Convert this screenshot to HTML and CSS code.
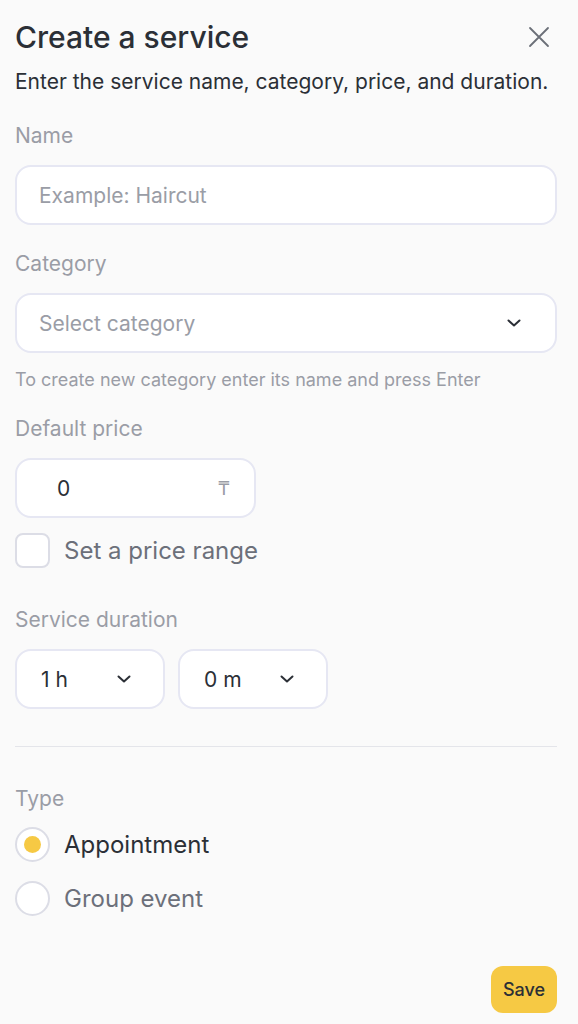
FILE: index.html
```html
<!DOCTYPE html>
<html lang="en">
<head>
  <meta charset="UTF-8">
  <meta name="viewport" content="width=device-width, initial-scale=1.0">
  <title>Create a service</title>
  <link rel="stylesheet" href="styles.css">
</head>
<body>
  <div class="sheet">
    <div class="header">
      <h1>Create a service</h1>
      <button class="close-btn" aria-label="Close">
        <svg width="24" height="24" viewBox="0 0 24 24" fill="none" stroke="#6b6f78" stroke-width="1.8" stroke-linecap="round">
          <path d="M3 3L21 21M21 3L3 21"/>
        </svg>
      </button>
    </div>
    <p class="subtitle">Enter the service name, category, price, and duration.</p>

    <label class="field-label name-label">Name</label>
    <div class="input">
      <span class="placeholder">Example: Haircut</span>
    </div>

    <label class="field-label">Category</label>
    <div class="input select">
      <span class="placeholder">Select category</span>
      <svg class="chevron" width="14" height="8" viewBox="0 0 14 8" fill="none" stroke="#2b2f36" stroke-width="2" stroke-linecap="round" stroke-linejoin="round">
        <path d="M1.5 1.5L7 6.5L12.5 1.5"/>
      </svg>
    </div>
    <p class="hint">To create new category enter its name and press Enter</p>

    <label class="field-label">Default price</label>
    <div class="input price">
      <span class="value">0</span>
      <span class="currency">₸</span>
    </div>

    <div class="check-row">
      <span class="checkbox"></span>
      <span class="check-text">Set a price range</span>
    </div>

    <label class="field-label duration-label">Service duration</label>
    <div class="duration">
      <div class="input select small">
        <span class="value">1 h</span>
        <svg class="chevron" width="14" height="8" viewBox="0 0 14 8" fill="none" stroke="#2b2f36" stroke-width="2" stroke-linecap="round" stroke-linejoin="round">
          <path d="M1.5 1.5L7 6.5L12.5 1.5"/>
        </svg>
      </div>
      <div class="input select small">
        <span class="value">0 m</span>
        <svg class="chevron" width="14" height="8" viewBox="0 0 14 8" fill="none" stroke="#2b2f36" stroke-width="2" stroke-linecap="round" stroke-linejoin="round">
          <path d="M1.5 1.5L7 6.5L12.5 1.5"/>
        </svg>
      </div>
    </div>

    <hr class="divider">

    <label class="field-label type-label">Type</label>
    <div class="radio-row">
      <span class="radio checked"></span>
      <span class="radio-text active">Appointment</span>
    </div>
    <div class="radio-row">
      <span class="radio"></span>
      <span class="radio-text">Group event</span>
    </div>

    <div class="footer">
      <button class="save-btn">Save</button>
    </div>
  </div>
</body>
</html>
```

FILE: styles.css
```css
body {
  margin: 0;
  background: #fafafa;
  font-family: 'Inter', 'Roboto', sans-serif;
  color: #2b2f36;
}

.sheet {
  padding: 0 21px 0 15px;
}

.header {
  display: flex;
  align-items: center;
  justify-content: space-between;
  height: 74px;
}

h1 {
  margin: 0;
  font-size: 30px;
  line-height: 36px;
  font-weight: 500;
  color: #2b2f36;
}

.close-btn {
  background: none;
  border: none;
  padding: 0;
  margin-right: 6px;
  cursor: pointer;
  display: flex;
}

.subtitle {
  margin: -4px 0 0;
  font-size: 21px;
  line-height: 24px;
  color: #2b2f36;
}

.field-label {
  display: block;
  margin-top: 27px;
  font-size: 21px;
  line-height: 24px;
  color: #9a9da6;
}

.name-label {
  margin-top: 30px;
}

.input {
  box-sizing: border-box;
  margin-top: 17px;
  height: 60px;
  background: #fff;
  border: 2px solid #e6e7f3;
  border-radius: 16px;
  display: flex;
  align-items: center;
  padding: 0 22px;
  font-size: 21px;
}

.placeholder {
  color: #9a9da6;
}

.select {
  justify-content: space-between;
}

.chevron {
  margin-right: 12px;
}

.hint {
  margin: 16px 0 -1px;
  font-size: 18px;
  line-height: 22px;
  color: #9a9da6;
}

.price {
  width: 241px;
  justify-content: space-between;
  padding: 0 24px 0 40px;
}

.value {
  color: #2b2f36;
}

.currency {
  color: #9a9da6;
  font-size: 19px;
}

.check-row {
  display: flex;
  align-items: center;
  gap: 14px;
  margin-top: 15px;
}

.checkbox {
  box-sizing: border-box;
  width: 35px;
  height: 35px;
  border: 2px solid #dcdde6;
  border-radius: 8px;
  background: #fff;
}

.check-text {
  font-size: 24px;
  line-height: 28px;
  color: #6c707a;
}

.duration-label {
  margin-top: 40px;
}

.duration {
  display: flex;
  gap: 13px;
}

.small {
  width: 150px;
  padding: 0 32px 0 24px;
}

.small .chevron {
  margin-right: 0;
}

.divider {
  margin: 37px 0 0;
  border: none;
  border-top: 1px solid #e4e5ea;
}

.type-label {
  margin-top: 40px;
}

.radio-row {
  display: flex;
  align-items: center;
  gap: 14px;
  margin-top: 16px;
}

.radio-row + .radio-row {
  margin-top: 19px;
}

.radio {
  box-sizing: border-box;
  width: 35px;
  height: 35px;
  border: 2px solid #dcdde6;
  border-radius: 50%;
  background: #fff;
  display: flex;
  align-items: center;
  justify-content: center;
}

.radio.checked::after {
  content: "";
  width: 17px;
  height: 17px;
  border-radius: 50%;
  background: #f6c944;
}

.radio-text {
  font-size: 24px;
  line-height: 28px;
  color: #6c707a;
}

.radio-text.active {
  color: #2b2f36;
}

.footer {
  display: flex;
  justify-content: flex-end;
  margin-top: 50px;
}

.save-btn {
  background: #f6c944;
  border: none;
  border-radius: 12px;
  width: 66px;
  height: 47px;
  font-family: inherit;
  font-size: 18px;
  font-weight: 500;
  color: #2b2f36;
  cursor: pointer;
}
```
